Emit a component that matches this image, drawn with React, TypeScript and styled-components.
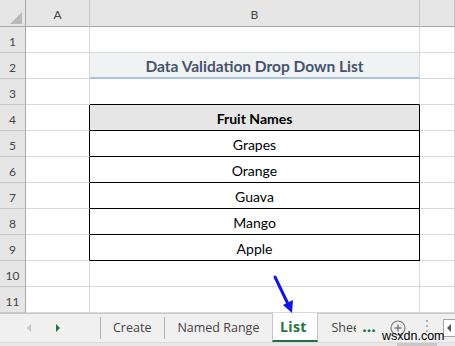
import React from 'react';
import styled, { createGlobalStyle } from 'styled-components';

const GlobalStyle = createGlobalStyle`
  html, body {
    margin: 0;
    padding: 0;
    background: #ffffff;
  }
  body {
    width: 455px;
    height: 346px;
    overflow: hidden;
    font-family: Lato, 'Liberation Sans', sans-serif;
  }
`;

const GRID = '#d9d9d9';
const BLACK = '#000000';

const Window = styled.div`
  position: relative;
  width: 455px;
  height: 346px;
  display: flex;
  flex-direction: column;
  overflow: hidden;
`;

const Sheet = styled.div`
  display: grid;
  grid-template-columns: 26px 64px 330px 35px;
  grid-template-rows: 27px repeat(11, 26px);
`;

const Corner = styled.div`
  box-sizing: border-box;
  background: #e6e6e6;
  border-right: 1px solid #a6a6a6;
  border-bottom: 1px solid #a6a6a6;
  display: flex;
  align-items: flex-end;
  justify-content: flex-end;
  padding: 0 3px 2px 0;
`;

const ColHead = styled.div`
  box-sizing: border-box;
  background: #e6e6e6;
  border-right: 1px solid #c8c8c8;
  border-bottom: 1px solid #a6a6a6;
  display: flex;
  align-items: center;
  justify-content: center;
  padding-top: 2px;
  font-size: 12px;
  color: #444444;
`;

const RowHead = styled.div`
  box-sizing: border-box;
  background: #e6e6e6;
  border-right: 1px solid #a6a6a6;
  border-bottom: 1px solid #c8c8c8;
  display: flex;
  align-items: center;
  justify-content: center;
  padding-top: 3px;
  font-size: 12px;
  color: #444444;
`;

const Cell = styled.div<{
  $right?: string;
  $bottom?: string;
  $fill?: string;
}>`
  box-sizing: border-box;
  background: ${(p) => p.$fill || '#ffffff'};
  border-right: 1px solid ${(p) => p.$right || GRID};
  border-bottom: 1px solid ${(p) => p.$bottom || GRID};
  display: flex;
  align-items: center;
  justify-content: center;
  padding-top: 2px;
  font-size: 14px;
  color: #000000;
`;

const TitleCell = styled(Cell)`
  border-bottom: 2px solid #abc3e2;
  background: #f1f2f4;
  font-size: 15.5px;
  font-weight: 700;
  color: #44546a;
  padding-top: 1px;
`;

const HeaderCell = styled(Cell)`
  font-weight: 700;
`;

const TabBar = styled.div`
  box-sizing: border-box;
  height: 30px;
  display: flex;
  align-items: stretch;
  background: #f0f0f0;
  border-top: 1px solid #c6c6c6;
  font-family: 'Open Sans', 'Liberation Sans', sans-serif;
  font-size: 12.5px;
  color: #444444;
`;

const Nav = styled.div`
  width: 100px;
  flex-shrink: 0;
  display: flex;
  align-items: center;
  gap: 25px;
  padding-left: 27px;
  box-sizing: border-box;
`;

const Triangle = styled.span<{ $dir: 'left' | 'right'; $color: string }>`
  width: 0;
  height: 0;
  border-top: 4px solid transparent;
  border-bottom: 4px solid transparent;
  ${(p) =>
    p.$dir === 'left'
      ? `border-right: 4px solid ${p.$color};`
      : `border-left: 4px solid ${p.$color};`}
`;

const Separator = styled.span`
  width: 1px;
  flex-shrink: 0;
  align-self: center;
  height: 22px;
  background: #b4b4b4;
`;

const Tab = styled.div<{ $active?: boolean; $clip?: number }>`
  box-sizing: border-box;
  flex-shrink: 0;
  display: flex;
  align-items: center;
  padding: 0 13px 1px 12px;
  white-space: nowrap;
  overflow: hidden;
  ${(p) => (p.$clip ? `width: ${p.$clip}px; padding-right: 0; padding-left: 13px;` : '')}
  ${(p) =>
    p.$active &&
    `
    width: 46px;
    justify-content: center;
    background: #ffffff;
    color: #217346;
    font-size: 14px;
    font-weight: 700;
    letter-spacing: 0.4px;
    padding: 0 4px 0 0;
    border-left: 1px solid #c6c6c6;
    border-right: 1px solid #c6c6c6;
    border-bottom: 2px solid #217346;
    margin-top: -1px;
  `}
`;

const Ellipsis = styled.span`
  align-self: center;
  margin-left: 6px;
  color: #217346;
  font-weight: 800;
  font-size: 14px;
  letter-spacing: 0.5px;
  padding-bottom: 4px;
`;

const AddButton = styled.span`
  align-self: center;
  margin-left: 14px;
  display: flex;
`;

const DotDivider = styled.span`
  align-self: center;
  margin-left: 20px;
  width: 2px;
  height: 16px;
  background: repeating-linear-gradient(
    to bottom,
    #b0b0b0 0 2px,
    transparent 2px 5px
  );
`;

const ScrollBox = styled.span`
  align-self: center;
  margin-left: 15px;
  width: 14px;
  height: 18px;
  box-sizing: border-box;
  background: #ffffff;
  border: 1px solid #a6a6a6;
  border-right: none;
  display: flex;
  align-items: center;
  justify-content: center;
`;

const ScrollStrip = styled.div`
  height: 3px;
  display: flex;
  background: #e8e8e8;
  border-top: 1px solid #dcdcdc;
`;

const Thumb = styled.span`
  margin-left: 397px;
  width: 40px;
  background: #c8c8c8;
`;

const Pointer = styled.svg`
  position: absolute;
  left: 266px;
  top: 270px;
  pointer-events: none;
`;

const Watermark = styled.span`
  position: absolute;
  left: 382px;
  top: 330px;
  font-family: 'Liberation Sans', Arial, sans-serif;
  font-size: 12.5px;
  line-height: 13px;
  color: #000000;
`;

const fruits = ['Grapes', 'Orange', 'Guava', 'Mango', 'Apple'];

export default function App() {
  const rows: React.ReactNode[] = [];
  for (let r = 1; r <= 11; r++) {
    const inTable = r >= 4 && r <= 9;
    let b: React.ReactNode;
    if (r === 2) {
      b = <TitleCell key={`b${r}`}>Data Validation Drop Down List</TitleCell>;
    } else if (r === 4) {
      b = (
        <HeaderCell key={`b${r}`} $right={BLACK} $bottom={BLACK} $fill="#e7e6e6">
          Fruit Names
        </HeaderCell>
      );
    } else if (inTable) {
      b = (
        <Cell key={`b${r}`} $right={BLACK} $bottom={BLACK}>
          {fruits[r - 5]}
        </Cell>
      );
    } else {
      b = <Cell key={`b${r}`} $bottom={r === 3 ? BLACK : undefined} />;
    }
    rows.push(
      <RowHead key={`h${r}`}>{r}</RowHead>,
      <Cell key={`a${r}`} $right={inTable ? BLACK : undefined} />,
      b,
      <Cell key={`c${r}`} />
    );
  }

  return (
    <Window>
      <GlobalStyle />
      <Sheet>
        <Corner>
          <svg width="12" height="12" viewBox="0 0 12 12">
            <polygon points="12,0 12,12 0,12" fill="#b9b9b9" />
          </svg>
        </Corner>
        <ColHead>A</ColHead>
        <ColHead>B</ColHead>
        <ColHead />
        {rows}
      </Sheet>
      <TabBar>
        <Nav>
          <Triangle $dir="left" $color="#c4c4c4" />
          <Triangle $dir="right" $color="#217346" />
        </Nav>
        <Separator />
        <Tab>Create</Tab>
        <Separator />
        <Tab>Named Range</Tab>
        <Tab $active>List</Tab>
        <Tab $clip={38}>Sheet1</Tab>
        <Ellipsis>...</Ellipsis>
        <AddButton>
          <svg width="16" height="16" viewBox="0 0 16 16">
            <circle cx="8" cy="8" r="7" fill="none" stroke="#7a7a7a" strokeWidth="1.2" />
            <path d="M8 4.5v7M4.5 8h7" stroke="#7a7a7a" strokeWidth="1.4" />
          </svg>
        </AddButton>
        <DotDivider />
        <ScrollBox>
          <Triangle $dir="left" $color="#5a5a5a" />
        </ScrollBox>
      </TabBar>
      <ScrollStrip>
        <Thumb />
      </ScrollStrip>
      <Pointer width="32" height="46" viewBox="0 0 32 46">
        <line x1="9" y1="7" x2="22" y2="34" stroke="#1414e6" strokeWidth="3" strokeLinecap="round" />
        <polygon points="26,43 17,35 27,30" fill="#1414e6" />
      </Pointer>
      <Watermark>wsxdn.com</Watermark>
    </Window>
  );
}
